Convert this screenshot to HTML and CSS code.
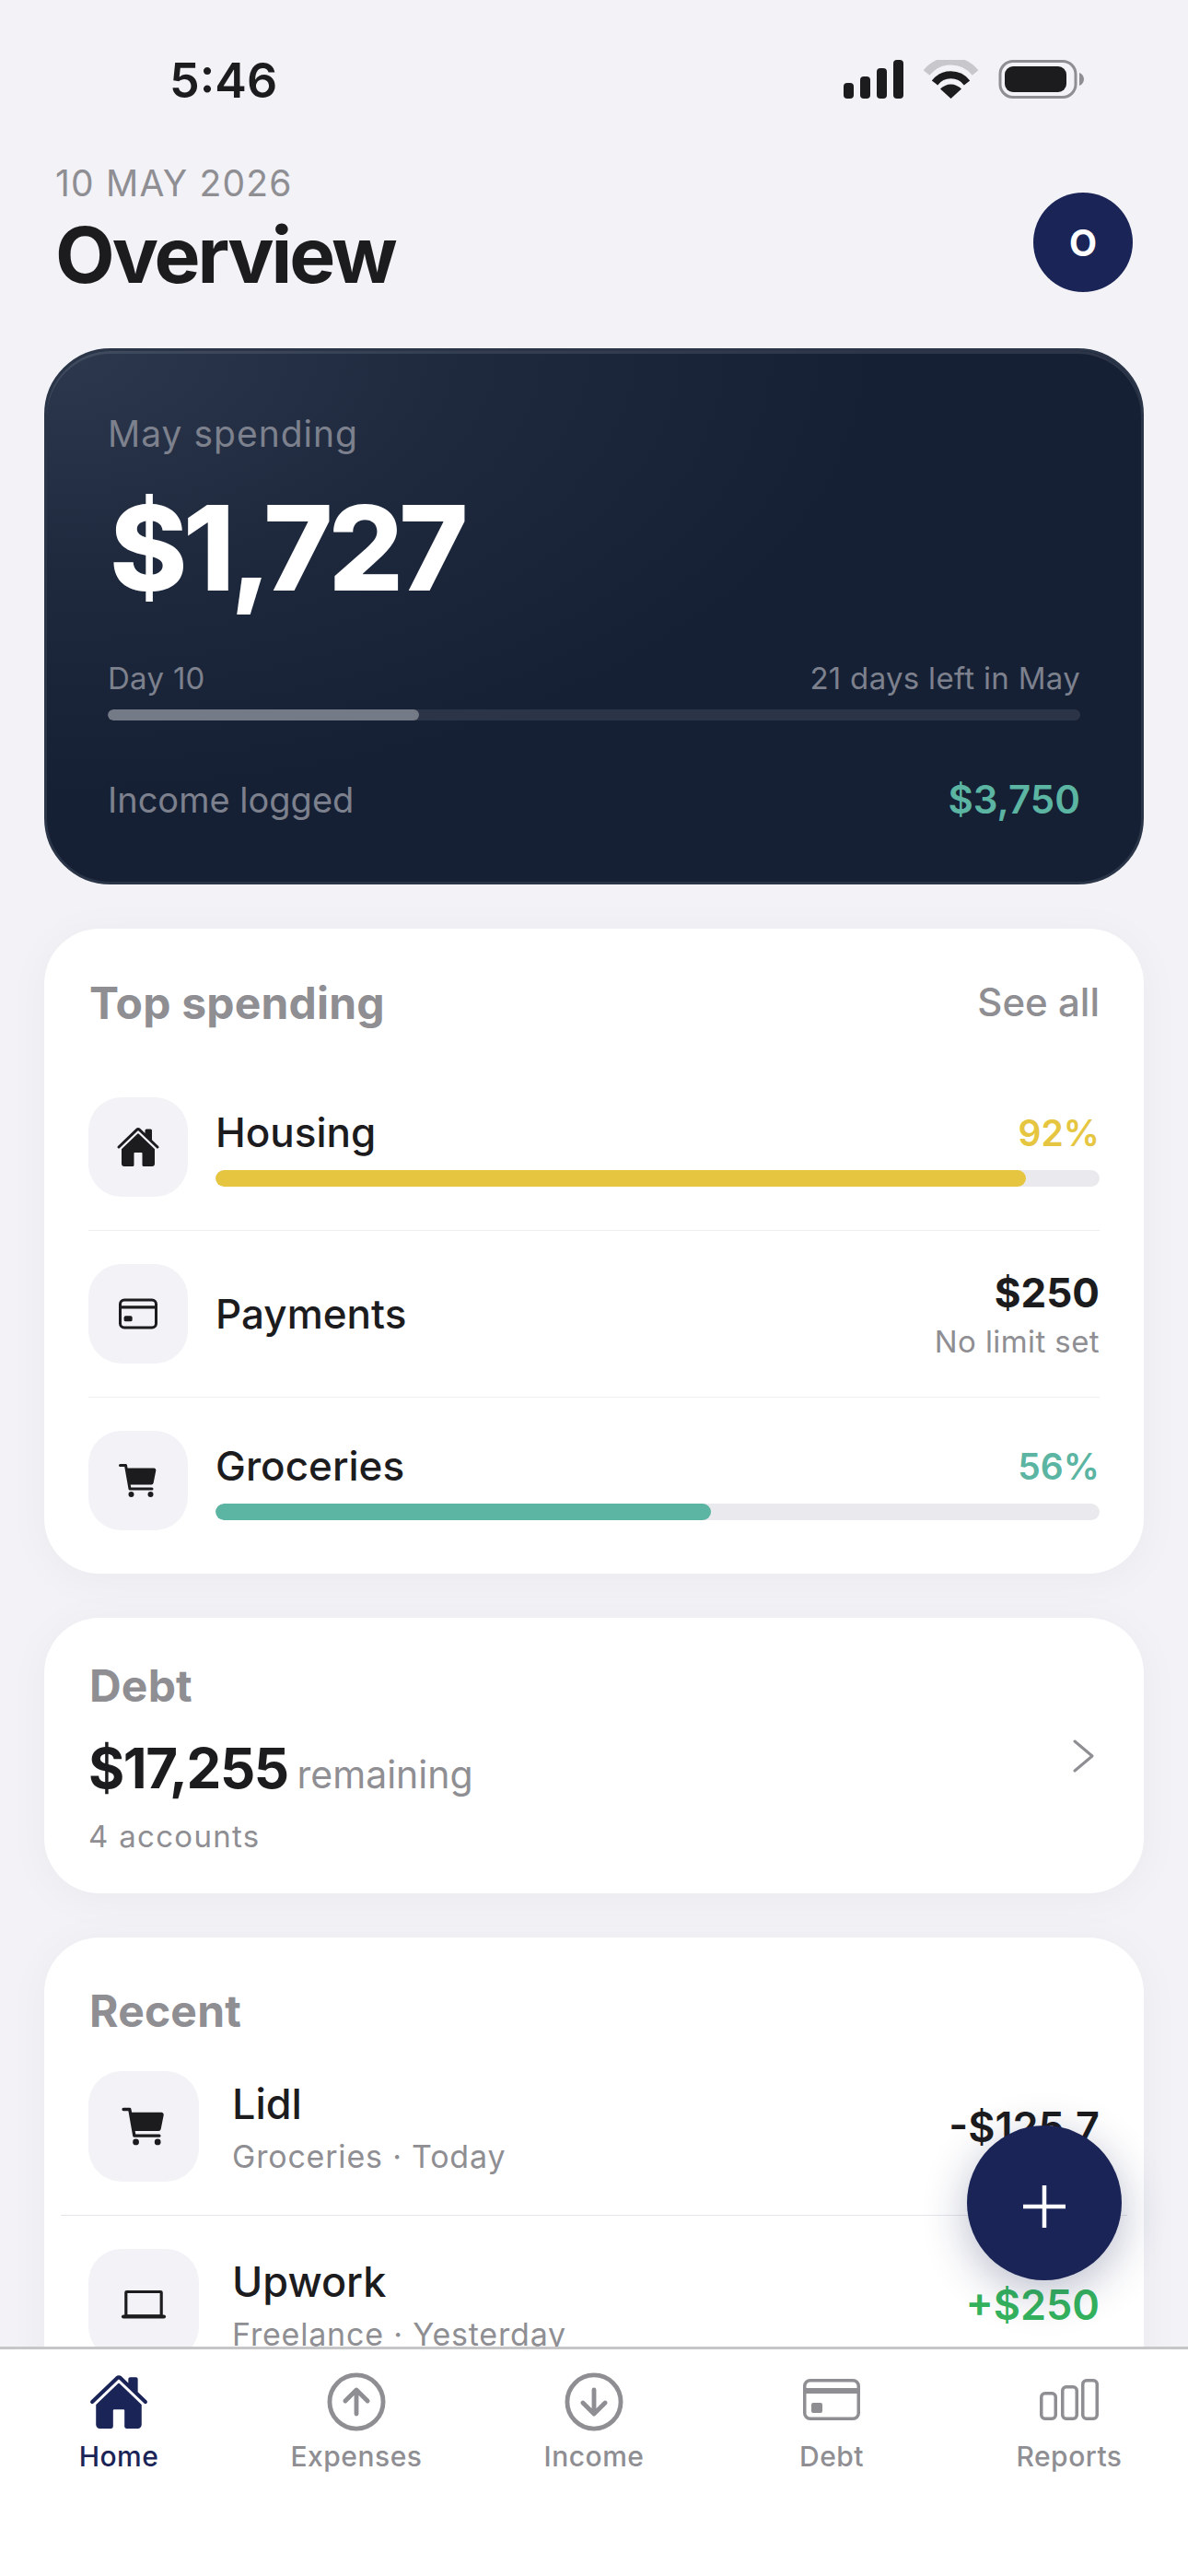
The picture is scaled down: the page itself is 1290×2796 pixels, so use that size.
FILE: index.html
```html
<!DOCTYPE html>
<html lang="en">

<head>
    <meta charset="UTF-8">
    <meta name="viewport" content="width=device-width, initial-scale=1.0">
    <title>Overview</title>
    <link rel="stylesheet" href="styles.css">
</head>

<body>

    <div class="phone">
        <div class="status-bar">
            <span class="status-time">5:46</span>
            <svg class="status-icons" width="262" height="42" viewBox="0 0 262 42">
                <rect x="1" y="25" width="11" height="17" rx="4" fill="#1c1c1e" />
                <rect x="19" y="18" width="11" height="24" rx="4" fill="#1c1c1e" />
                <rect x="37" y="9" width="11" height="33" rx="4" fill="#1c1c1e" />
                <rect x="55" y="0" width="11" height="42" rx="4" fill="#1c1c1e" />
                <path d="M91 14 A34 34 0 0 1 144 14" fill="none" stroke="#c7c7cc" stroke-width="8.5" />
                <path d="M100 25 A22 22 0 0 1 135 25" fill="none" stroke="#1c1c1e" stroke-width="8" />
                <path d="M117.500 42 L106 31.500 A16 16 0 0 1 129 31.500 Z" fill="#1c1c1e" />
                <rect x="171" y="1.500" width="82" height="39" rx="14" fill="none" stroke="#8e8e93" stroke-width="3" />
                <rect x="176" y="7" width="67" height="28" rx="9" fill="#1c1c1e" />
                <path d="M257 14 C260 15 262 18 262 21 C262 24 260 27 257 28 Z" fill="#8e8e93" />
            </svg>
        </div>

        <div class="scroll-area">
            <div class="page-header">
                <div>
                    <div class="page-date">10 MAY 2026</div>
                    <h1 class="page-title">Overview</h1>
                </div>
                <div class="avatar">O</div>
            </div>

            <div class="hero-card">
                <div class="hero-label">May spending</div>
                <div class="hero-amount">$1,727</div>
                <div class="hero-progress-labels">
                    <span>Day 10</span>
                    <span>21 days left in May</span>
                </div>
                <div class="hero-track">
                    <div class="hero-fill" style="width: 32%"></div>
                </div>
                <div class="hero-income">
                    <span>Income logged</span>
                    <span class="hero-income-value">$3,750</span>
                </div>
            </div>

            <div class="card spending-card">
                <div class="card-header">
                    <h2 class="card-title">Top spending</h2>
                    <span class="see-all">See all</span>
                </div>

                <div class="spend-row spend-row-first">
                    <div class="icon-box">
                        <svg class="icon-small" viewBox="0 0 512 512"><use href="#icon-home" /></svg>
                    </div>
                    <div class="spend-body">
                        <div class="spend-line">
                            <span class="spend-name">Housing</span>
                            <span class="spend-pct pct-yellow">92%</span>
                        </div>
                        <div class="spend-track">
                            <div class="spend-fill fill-yellow" style="width: 91.7%"></div>
                        </div>
                    </div>
                </div>

                <div class="spend-row">
                    <div class="icon-box">
                        <svg class="icon-small" viewBox="0 0 512 512"><use href="#icon-card" /></svg>
                    </div>
                    <div class="spend-body spend-body-plain">
                        <span class="spend-name">Payments</span>
                        <div class="spend-amount">
                            <div class="spend-value">$250</div>
                            <div class="spend-note">No limit set</div>
                        </div>
                    </div>
                </div>

                <div class="spend-row">
                    <div class="icon-box">
                        <svg class="icon-small" viewBox="0 0 512 512"><use href="#icon-cart" /></svg>
                    </div>
                    <div class="spend-body">
                        <div class="spend-line">
                            <span class="spend-name">Groceries</span>
                            <span class="spend-pct pct-green">56%</span>
                        </div>
                        <div class="spend-track">
                            <div class="spend-fill fill-green" style="width: 56%"></div>
                        </div>
                    </div>
                </div>
            </div>

            <div class="card debt-card">
                <div>
                    <h2 class="card-title">Debt</h2>
                    <div class="debt-total">
                        <span class="debt-amount">$17,255</span>
                        <span class="debt-remaining">remaining</span>
                    </div>
                    <div class="debt-accounts">4 accounts</div>
                </div>
                <svg class="debt-chevron" width="24" height="36" viewBox="0 0 24 36">
                    <path d="M2 2 L21 18 L2 34" fill="none" stroke="#8e8e93" stroke-width="3" stroke-linecap="round" stroke-linejoin="round" />
                </svg>
            </div>

            <div class="card recent-card">
                <h2 class="card-title">Recent</h2>

                <div class="recent-row recent-row-first">
                    <div class="icon-box icon-box-large">
                        <svg class="icon-medium" viewBox="0 0 512 512"><use href="#icon-cart" /></svg>
                    </div>
                    <div class="recent-info">
                        <div class="recent-name">Lidl</div>
                        <div class="recent-sub">Groceries · Today</div>
                    </div>
                    <div class="recent-amount">-$125.7</div>
                </div>

                <div class="recent-row">
                    <div class="icon-box icon-box-large">
                        <svg class="icon-medium" viewBox="0 0 512 512"><use href="#icon-laptop" /></svg>
                    </div>
                    <div class="recent-info">
                        <div class="recent-name">Upwork</div>
                        <div class="recent-sub">Freelance · Yesterday</div>
                    </div>
                    <div class="recent-amount amount-income">+$250</div>
                </div>
            </div>
        </div>

        <button class="fab">
            <svg width="48" height="48" viewBox="0 0 48 48">
                <path d="M24 1 V47 M1 24 H47" stroke="#fff" stroke-width="4.500" />
            </svg>
        </button>

        <nav class="tab-bar">
            <div class="tab tab-active">
                <svg class="tab-icon" viewBox="0 0 512 512"><use href="#icon-home" /></svg>
                <span>Home</span>
            </div>
            <div class="tab">
                <svg class="tab-icon" viewBox="38 38 436 436">
                    <path d="M176 249.380 L256 170 L336 249.380 M256 181 V342" class="tab-line" />
                    <circle cx="256" cy="256" r="192" class="tab-line" />
                </svg>
                <span>Expenses</span>
            </div>
            <div class="tab">
                <svg class="tab-icon" viewBox="38 38 436 436">
                    <path d="M176 262.620 L256 342 L336 262.620 M256 331 V170" class="tab-line" />
                    <circle cx="256" cy="256" r="192" class="tab-line" />
                </svg>
                <span>Income</span>
            </div>
            <div class="tab">
                <svg class="tab-icon" viewBox="0 0 66 66">
                    <rect x="3.750" y="9.750" width="58.500" height="41.500" rx="6" fill="none" stroke="currentColor" stroke-width="3.500" />
                    <rect x="3" y="18" width="60" height="6" fill="currentColor" />
                    <rect x="11" y="34" width="12" height="11" rx="2" fill="currentColor" />
                </svg>
                <span>Debt</span>
            </div>
            <div class="tab">
                <svg class="tab-icon" viewBox="0 0 66 66">
                    <rect x="2.750" y="23.750" width="15.500" height="27.500" rx="4" fill="none" stroke="currentColor" stroke-width="3.500" />
                    <rect x="25.750" y="16.750" width="15.500" height="34.500" rx="4" fill="none" stroke="currentColor" stroke-width="3.500" />
                    <rect x="47.750" y="9.750" width="15.500" height="41.500" rx="4" fill="none" stroke="currentColor" stroke-width="3.500" />
                </svg>
                <span>Reports</span>
            </div>
        </nav>
    </div>

    <!-- shared icons -->
    <svg class="icon-defs" width="0" height="0">
        <defs>
            <g id="icon-home" fill="currentColor">
                <path d="M261.560 101.280a8 8 0 00-11.060 0L66.400 277.150a8 8 0 00-2.470 5.790L63.900 448a32 32 0 0032 32H192a16 16 0 0016-16V328a8 8 0 018-8h80a8 8 0 018 8v136a16 16 0 0016 16h96.060a32 32 0 0032-32V282.940a8 8 0 00-2.470-5.790z" />
                <path d="M490.910 244.150l-74.800-71.560V64a16 16 0 00-16-16h-48a16 16 0 00-16 16v32l-57.920-55.380C272.770 35.140 264.710 32 256 32c-8.680 0-16.720 3.140-22.140 8.630l-212.700 203.500c-6.220 6-7 15.870-1.340 22.370A16 16 0 0043 267.560L250.500 69.280a8 8 0 0111.060 0l207.520 198.280a16 16 0 0022.590-.44c6.140-6.360 5.630-16.860-.76-22.970z" />
            </g>
            <g id="icon-card" fill="none" stroke="currentColor" stroke-linejoin="round">
                <rect x="48" y="96" width="416" height="320" rx="48" stroke-width="32" />
                <path d="M48 180h416" stroke-width="36" />
                <path d="M112 300h56v24h-56z" stroke-width="40" />
            </g>
            <g id="icon-cart" fill="currentColor">
                <circle cx="176" cy="416" r="32" />
                <circle cx="400" cy="416" r="32" />
                <path d="M456.800 120.780a23.920 23.920 0 00-18.560-8.780H133.890l-6.130-34.780A16 16 0 00112 64H48a16 16 0 000 32h50.580l45.660 258.780A16 16 0 00160 368h256a16 16 0 000-32H173.420l-5.640-32h241.660A24.070 24.070 0 00433 284.710l28.800-144a24 24 0 00-5-19.930z" />
            </g>
            <g id="icon-laptop" fill="none" stroke="currentColor">
                <rect x="74" y="128" width="364" height="250" rx="8" stroke-width="30" />
                <path d="M48 384h416" stroke-width="40" stroke-linecap="round" />
            </g>
        </defs>
    </svg>

</body>

</html>
```

FILE: styles.css
```css
* {
    box-sizing: border-box;
}

body {
    font-family: Inter, "Noto Sans", sans-serif;
    background-color: #f2f2f7;
    color: #1c1c1e;
    margin: 0;
    padding: 0;
}

h1,
h2 {
    margin: 0;
}

.phone {
    position: relative;
    width: 1290px;
    height: 2796px;
    display: flex;
    flex-direction: column;
    overflow: hidden;
}

/* status bar */
.status-bar {
    flex: none;
    height: 107px;
    padding: 65px 113px 0 184px;
    display: flex;
    justify-content: space-between;
}

.status-time {
    font-size: 52px;
    font-weight: 600;
    line-height: 46px;
}

.status-icons {
    display: block;
}

/* scrolling content */
.scroll-area {
    flex: 1;
    min-height: 0;
    overflow: hidden;
    padding: 0 48px;
}

.page-header {
    display: flex;
    justify-content: space-between;
    align-items: flex-start;
    padding: 68px 12px 0;
    height: 271px;
}

.page-date {
    font-size: 39px;
    line-height: 47px;
    letter-spacing: 1.2px;
    color: #8e8e93;
}

.page-title {
    margin-top: 5px;
    font-size: 84px;
    font-weight: 700;
    line-height: 100px;
    letter-spacing: -3px;
}

.avatar {
    margin-top: 34px;
    width: 108px;
    height: 108px;
    border-radius: 50%;
    background-color: #1a2456;
    color: #fff;
    font-size: 39px;
    font-weight: 700;
    display: flex;
    align-items: center;
    justify-content: center;
}

/* dark summary card */
.hero-card {
    height: 582px;
    padding: 66px 66px 0;
    border: 3px solid #2a3548;
    border-radius: 72px;
    background: radial-gradient(ellipse 900px 480px at 0 0, #2d384e 0%, #1e293e 50%, #162035 100%);
    background-color: #162035;
    box-shadow: inset 0 3px 0 rgba(255, 255, 255, 0.1);
    color: #7d818d;
}

.hero-label {
    font-size: 39px;
    line-height: 48px;
    letter-spacing: 1px;
}

.hero-amount {
    margin-top: 25px;
    padding-left: 2px;
    font-size: 128px;
    font-weight: 800;
    line-height: 150px;
    letter-spacing: -5px;
    color: #fff;
}

.hero-progress-labels {
    margin-top: 46px;
    display: flex;
    justify-content: space-between;
    font-size: 33px;
    line-height: 40px;
    letter-spacing: 0.3px;
}

.hero-track {
    margin-top: 14px;
    height: 12px;
    border-radius: 6px;
    background-color: #2c3548;
    overflow: hidden;
}

.hero-fill {
    height: 100%;
    border-radius: 6px;
    background-color: #747a86;
}

.hero-income {
    margin-top: 60px;
    display: flex;
    justify-content: space-between;
    align-items: center;
    font-size: 38px;
    line-height: 52px;
}

.hero-income-value {
    font-size: 42px;
    font-weight: 600;
    color: #5bb5a2;
}

/* white cards */
.card {
    margin-top: 48px;
    border-radius: 60px;
    background-color: #fff;
    box-shadow: 0 6px 48px rgba(0, 0, 0, 0.04);
}

.card-title {
    padding-left: 1px;
    font-size: 48px;
    font-weight: 700;
    line-height: 58px;
    letter-spacing: 0.2px;
    color: #8e8e93;
}

.spending-card {
    height: 700px;
    padding: 48px;
}

.card-header {
    display: flex;
    justify-content: space-between;
    align-items: flex-start;
    height: 99px;
    padding-top: 4px;
}

.see-all {
    padding-top: 2px;
    font-size: 42px;
    font-weight: 500;
    color: #8e8e93;
}

.spend-row {
    display: flex;
    align-items: center;
    gap: 30px;
    padding: 36px 0;
    border-top: 1px solid #eeeef1;
}

.spend-row-first {
    border-top: none;
}

.icon-box {
    flex: none;
    width: 108px;
    height: 108px;
    border-radius: 36px;
    background-color: #f2f2f7;
    display: flex;
    align-items: center;
    justify-content: center;
}

.icon-box-large {
    width: 120px;
    height: 120px;
}

.icon-small {
    width: 48px;
    height: 48px;
}

.icon-medium {
    width: 54px;
    height: 54px;
}

.spend-body {
    flex: 1;
    min-width: 0;
}

.spend-body-plain {
    display: flex;
    justify-content: space-between;
    align-items: center;
}

.spend-line {
    display: flex;
    justify-content: space-between;
    align-items: center;
    margin-bottom: 14px;
}

.spend-name {
    font-size: 44px;
    font-weight: 500;
    line-height: 54px;
}

.spend-pct {
    font-size: 39px;
    font-weight: 600;
}

.pct-yellow {
    color: #e6c640;
}

.pct-green {
    color: #5bb5a2;
}

.spend-track {
    height: 18px;
    border-radius: 9px;
    background-color: #eaeaee;
    overflow: hidden;
}

.spend-fill {
    height: 100%;
    border-radius: 9px;
}

.fill-yellow {
    background-color: #e6c640;
}

.fill-green {
    background-color: #5bb5a2;
}

.spend-amount {
    text-align: right;
}

.spend-value {
    font-size: 44px;
    font-weight: 700;
    line-height: 54px;
}

.spend-note {
    margin-top: 5px;
    font-size: 33px;
    line-height: 42px;
    letter-spacing: 0.4px;
    color: #8e8e93;
}

/* debt card */
.debt-card {
    height: 299px;
    padding: 45px 48px 0;
    display: flex;
    justify-content: space-between;
    align-items: flex-start;
}

.debt-total {
    margin-top: 24px;
    display: flex;
    align-items: baseline;
    gap: 10px;
}

.debt-amount {
    font-size: 60px;
    font-weight: 700;
    line-height: 72px;
    letter-spacing: -1.5px;
}

.debt-remaining {
    font-size: 41px;
    color: #8e8e93;
}

.debt-accounts {
    margin-top: 16px;
    font-size: 33px;
    line-height: 44px;
    letter-spacing: 1.3px;
    color: #8e8e93;
}

.debt-chevron {
    margin-top: 87px;
    margin-right: 5px;
}

/* recent transactions */
.recent-card {
    height: 600px;
    padding: 51px 18px 0;
}

.recent-card .card-title {
    padding-left: 31px;
}

.recent-row {
    display: flex;
    align-items: center;
    gap: 36px;
    padding: 36px 30px;
    border-top: 1px solid #e5e5ea;
}

.recent-row-first {
    border-top: none;
}

.recent-info {
    flex: 1;
    min-width: 0;
    padding-top: 4px;
}

.recent-name {
    font-size: 45px;
    font-weight: 500;
    line-height: 58px;
}

.recent-sub {
    margin-top: 4px;
    font-size: 34px;
    line-height: 48px;
    letter-spacing: 0.8px;
    color: #8e8e93;
}

.recent-amount {
    font-size: 45px;
    font-weight: 600;
}

.amount-income {
    color: #34b45e;
}

/* floating add button */
.fab {
    position: absolute;
    top: 2307px;
    left: 1050px;
    width: 168px;
    height: 168px;
    padding: 8px 0 0;
    border: none;
    border-radius: 50%;
    background-color: #1a2456;
    box-shadow: 0 12px 48px rgba(26, 36, 86, 0.3);
    display: flex;
    align-items: center;
    justify-content: center;
}

/* bottom tabs */
.tab-bar {
    flex: none;
    height: 249px;
    border-top: 3px solid #c6c6c8;
    background-color: #fff;
    display: flex;
    padding-top: 24px;
}

.tab {
    flex: 1;
    display: flex;
    flex-direction: column;
    align-items: center;
    gap: 6px;
    font-size: 30px;
    font-weight: 500;
    line-height: 40px;
    letter-spacing: 0.5px;
    color: #8e8e93;
}

.tab-active {
    color: #1a2456;
}

.tab-icon {
    display: block;
    width: 66px;
    height: 66px;
}

.tab-line {
    fill: none;
    stroke: currentColor;
    stroke-width: 32;
    stroke-linecap: round;
    stroke-linejoin: round;
}

.icon-defs {
    position: absolute;
}
```
